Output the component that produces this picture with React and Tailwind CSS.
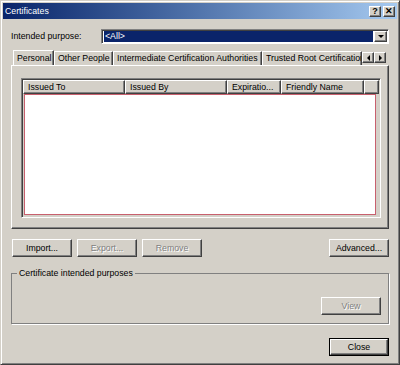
import React from 'react';

const raised =
  'border border-t-white border-l-white border-r-[#404040] border-b-[#404040] shadow-[inset_-1px_-1px_#808080]';
const sunken =
  'border border-t-[#808080] border-l-[#808080] border-r-white border-b-white shadow-[inset_1px_1px_#404040]';

const Btn = ({ children, disabled, isDefault, className = '' }) => (
  <div
    className={`h-[18px] w-[60px] ${isDefault ? 'border border-black' : ''} ${className}`}
  >
    <div
      className={`h-full w-full flex items-center justify-center ${raised} ${
        disabled ? 'text-[#808080] [text-shadow:1px_1px_#fff]' : 'text-black'
      }`}
    >
      {children}
    </div>
  </div>
);

const TitleBtn = ({ children }) => (
  <div className={`w-[12px] h-[11px] bg-[#d4d0c8] ${raised} flex items-center justify-center text-[9px] font-bold leading-none text-black`}>
    {children}
  </div>
);

const Tri = ({ dir }) => {
  const pts = {
    down: '0,0 6,0 3,3',
    left: '3,0 3,6 0,3',
    right: '0,0 0,6 3,3',
  }[dir];
  const w = dir === 'down' ? 6 : 3;
  const h = dir === 'down' ? 3 : 6;
  return (
    <svg width={w} height={h} viewBox={`0 0 ${w} ${h}`}>
      <polygon points={pts} fill="#000" />
    </svg>
  );
};

const HeaderCol = ({ w, children }) => (
  <div className={`${w} h-full shrink-0 ${raised} flex items-center pl-[4px] overflow-hidden whitespace-nowrap`}>
    {children}
  </div>
);

const Tab = ({ children, w }) => (
  <div
    className={`${w} h-[14px] shrink-0 border-t border-l border-t-white border-l-white border-r border-r-[#404040] shadow-[inset_-1px_0_#808080] flex items-center pl-[3px] whitespace-nowrap overflow-hidden`}
  >
    {children}
  </div>
);

export default function App() {
  return (
    <div
      className="w-[400px] h-[365px] bg-[#d4d0c8] border border-t-[#d4d0c8] border-l-[#d4d0c8] border-r-[#404040] border-b-[#404040] shadow-[inset_1px_1px_#fff,inset_-1px_-1px_#808080] p-[1px] flex flex-col text-[8.75px] leading-none text-black"
      style={{ fontFamily: '"Liberation Sans", Arial, sans-serif' }}
    >
      {/* title bar */}
      <div className="h-[16px] mx-[1px] mt-[1px] bg-gradient-to-r from-[#0a246a] to-[#a6caf0] flex items-center pl-[2px] pr-[2px]">
        <span className="text-white flex-1">Certificates</span>
        <div className="flex gap-[2px]">
          <TitleBtn>?</TitleBtn>
          <TitleBtn>✕</TitleBtn>
        </div>
      </div>

      <div className="ml-[9px] w-[378px] flex flex-col">
        {/* intended purpose */}
        <div className="mt-[10px] flex items-center h-[15px]">
          <span className="w-[90px]">Intended purpose:</span>
          <div className={`flex-1 h-[15px] bg-white ${sunken} pl-[2px] py-[1px] pr-[1px] flex items-center gap-[1px]`}>
            <div className="flex-1 h-[11px] bg-[#0a246a] text-white flex items-center pl-[1px]">&lt;All&gt;</div>
            <div className={`w-[13px] h-full bg-[#d4d0c8] ${raised} flex items-center justify-center`}>
              <Tri dir="down" />
            </div>
          </div>
        </div>

        {/* tabs */}
        <div className="mt-[4px] h-[17px] flex items-end pl-[2px]">
          <div className="w-[349px] flex items-end overflow-hidden">
            <div className="relative z-10 w-[41px] h-[16px] -mb-[1px] bg-[#d4d0c8] shrink-0 border-t border-l border-t-white border-l-white border-r border-r-[#404040] shadow-[inset_-1px_0_#808080] flex items-start pt-[3px] pl-[3px]">
              Personal
            </div>
            <Tab w="w-[59px]">Other People</Tab>
            <Tab w="w-[149px]">Intermediate Certification Authorities</Tab>
            <Tab w="w-[100px]">Trusted Root Certification</Tab>
          </div>
          <div className="flex self-start mt-[4px]">
            <div className={`w-[12px] h-[11px] ${raised} flex items-center justify-center`}>
              <Tri dir="left" />
            </div>
            <div className={`w-[12px] h-[11px] ${raised} flex items-center justify-center`}>
              <Tri dir="right" />
            </div>
          </div>
        </div>

        {/* tab panel */}
        <div className="h-[164px] border border-t-white border-l-white border-r-[#404040] border-b-[#404040] shadow-[inset_-1px_-1px_#808080] pt-[12px] pl-[9px]">
          <div className={`w-[360px] h-[140px] ${sunken} p-[1px] flex flex-col`}>
            <div className="h-[14px] flex shrink-0">
              <HeaderCol w="w-[102px]">Issued To</HeaderCol>
              <HeaderCol w="w-[102px]">Issued By</HeaderCol>
              <HeaderCol w="w-[54px]">Expiratio...</HeaderCol>
              <HeaderCol w="w-[83px]">Friendly Name</HeaderCol>
              <HeaderCol w="flex-1">{''}</HeaderCol>
            </div>
            <div className="flex-1 mr-[3px] ml-[1px] mb-[1px] bg-white border border-[#c8606e]" />
          </div>
        </div>

        {/* buttons */}
        <div className="mt-[10px] flex items-center pl-[1px]">
          <Btn>Import...</Btn>
          <Btn disabled className="ml-[5px]">Export...</Btn>
          <Btn disabled className="ml-[5px]">Remove</Btn>
          <div className="flex-1" />
          <Btn>Advanced...</Btn>
        </div>

        {/* group box */}
        <div className="relative mt-[16px] h-[51px] border border-[#808080] shadow-[1px_1px_#fff] flex flex-col items-end pr-[7px] pt-[23px]">
          <span className="absolute -top-[5px] left-[5px] bg-[#d4d0c8] px-[2px]">
            Certificate intended purposes
          </span>
          <Btn disabled>View</Btn>
        </div>

        {/* close */}
        <div className="mt-[14px] flex justify-end">
          <Btn isDefault>Close</Btn>
        </div>
      </div>
    </div>
  );
}
